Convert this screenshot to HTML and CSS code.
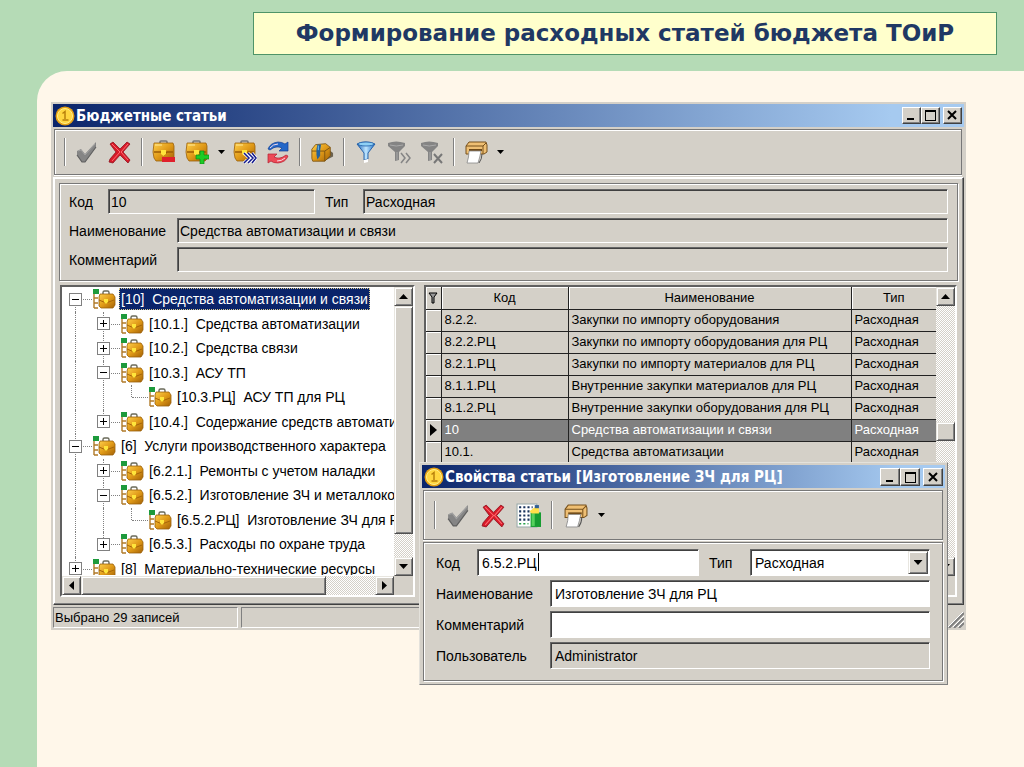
FILE: index.html
```html
<!DOCTYPE html>
<html lang="ru">
<head>
<meta charset="UTF-8">
<meta name="viewport" content="width=device-width, initial-scale=1.0">
<title>Формирование расходных статей бюджета ТОиР</title>
<link rel="stylesheet" href="styles.css">
</head>
<body>

<!-- shared icons -->
<svg class="sprite" aria-hidden="true">
    <defs>
        <linearGradient id="gold" x1="0" y1="0" x2="1" y2="1">
            <stop offset="0" stop-color="#ffcf4a"/>
            <stop offset="0.5" stop-color="#e09a18"/>
            <stop offset="1" stop-color="#a46206"/>
        </linearGradient>
        <linearGradient id="blue" x1="0" y1="0" x2="1" y2="0">
            <stop offset="0" stop-color="#1c62b8"/>
            <stop offset="0.5" stop-color="#bfe6ff"/>
            <stop offset="1" stop-color="#1b6cc6"/>
        </linearGradient>
    </defs>
    <symbol id="i-coin" viewBox="0 0 20 20">
        <circle cx="10" cy="10" r="9.5" fill="#e6a114"/>
        <circle cx="10" cy="10" r="7.5" fill="#ffd640" stroke="#fff08c" stroke-width="1"/>
        <path d="M7.5 7.5 10 5.5V13M7.5 14h6" fill="none" stroke="#b8800c" stroke-width="1.5"/>
    </symbol>
    <symbol id="i-check" viewBox="0 0 24 24">
        <path d="M2 11l4-2 4 5L21 2v5L10 22H7L2 15z" fill="#858585"/>
        <path d="M2 15l5 7h3L21 7" fill="none" stroke="#5f5f5f" stroke-width="1.2"/>
        <path d="M3 11l3-1 4 5L20 4" fill="none" stroke="#a2a2a2"/>
    </symbol>
    <symbol id="i-cross" viewBox="0 0 24 24">
        <path d="M2 4l3-2 7 7 7-7 3 2-7 8 7 8-2 3-8-8-7 8-4-1 1-3 6-7z" fill="#d71928" stroke="#8f1420" stroke-width="0.8"/>
        <path d="M4 4l8 8-8 9M20 4l-7 8 7 8" fill="none" stroke="#ff6a70" stroke-width="1"/>
    </symbol>
    <symbol id="i-case" viewBox="0 0 24 24">
        <path d="M8 4V2q0-1 1-1h5q1 0 1 1v2" fill="none" stroke="#777" stroke-width="1.6"/>
        <path d="M2 3h19l1 3v13l-2 2H4l-2-3-1-6z" fill="url(#gold)" stroke="#9a5f0a" stroke-width="0.8"/>
        <path d="M2 12h7l3 3 3-3h6" fill="none" stroke="#9c5c04" stroke-width="1.3"/>
        <path d="M9 10h5v4l-2.500 2L9 14z" fill="#ffe53b"/>
        <path d="M3 5h7" stroke="#ffe99a"/>
    </symbol>
    <symbol id="i-tree-case" viewBox="0 0 24 20">
        <path d="M2 4v15M2 9h4M2 14h4M2 19h4" fill="none" stroke="#b07a28" stroke-width="1.4"/>
        <path d="M1 0h6v5H1z" fill="#1d9a3c"/>
        <path d="M11 5V3.500Q11 2 12.500 2h3Q17 2 17 3.500V5" fill="none" stroke="#6a6a5a" stroke-width="1.4"/>
        <path d="M8 5h13l2 3v8l-2 3H9l-2-2V8z" fill="url(#gold)" stroke="#9a5f0a" stroke-width="0.8"/>
        <path d="M7 11l7 3 8-3" fill="none" stroke="#a56508"/>
        <path d="M12 10h4v3l-2 2-2-2z" fill="#ffe53b"/>
    </symbol>
    <symbol id="i-refresh" viewBox="0 0 24 24">
        <path d="M2 9q2-6 10-7 4 0 7 2l3-2v9h-9l3-3q-6-3-12 2z" fill="#2467c8" stroke="#143e94" stroke-width="0.7"/>
        <path d="M22 16q-2 6-10 7-5 0-7-2l-3 2v-9h9l-3 3q6 3 12-2z" fill="#ed4a56" stroke="#b21f32" stroke-width="0.7"/>
        <path d="M4 8q3-4 8-4M19 18q-3 3-8 3" fill="none" stroke="#f6d9e6"/>
    </symbol>
    <symbol id="i-chest" viewBox="0 0 26 24">
        <path d="M17 21l8-4v-4l-4-3z" fill="#6b6250"/>
        <path d="M2 9l4-5 11-1 5 4v9l-6 6H3l-1-3z" fill="url(#gold)" stroke="#7b5312" stroke-width="0.9"/>
        <path d="M2 11h14l6-4M16 11v11" fill="none" stroke="#7b5312"/>
        <path d="M8 4h4l-1 6v6l-3 4-1-5V9z" fill="#23629e"/>
        <path d="M9 5v5" stroke="#7cc4f2"/>
    </symbol>
    <symbol id="i-funnel" viewBox="0 0 24 24">
        <path d="M3 4q8-4 18 0l-7 9v6l-4 1v-7z" fill="url(#blue)" stroke="#1e5ba5" stroke-width="0.9"/>
        <ellipse cx="12" cy="4" rx="8" ry="2" fill="#8fd0f5" stroke="#1e5ba5" stroke-width="0.8"/>
        <path d="M10 20l4-1v3l-4 1z" fill="#fff"/>
    </symbol>
    <symbol id="i-funnel-off" viewBox="0 0 24 24">
        <path d="M1 3q8-3 17 0v3l-6 6v8l-4 1v-9L1 6z" fill="#848484"/>
        <path d="M3 5q6 2 13 0M10 12v8" fill="none" stroke="#aaa"/>
    </symbol>
    <symbol id="i-print" viewBox="0 0 24 24">
        <path d="M5 2h17l1 3v7l-3 2H2V6z" fill="#efbf73" stroke="#76501c"/>
        <path d="M2 6h17l3-3M19 6v8" fill="none" stroke="#76501c"/>
        <path d="M5 9h13v2H5z" fill="#6f4a18"/>
        <path d="M5 11h12q-1 6-3 12H3q2-6 2-12z" fill="#fff" stroke="#888" stroke-width="0.8"/>
        <path d="M18 14q0 5-3 9" fill="none" stroke="#555"/>
    </symbol>
    <symbol id="i-sheet" viewBox="0 0 24 24">
        <path d="M1 1h19v22H1z" fill="#fff" stroke="#9aa"/>
        <path d="M3 4h13M3 8h11M3 12h11M3 16h10" stroke="#18325c" stroke-width="2" stroke-dasharray="2 2"/>
        <path d="M3 20h9" stroke="#27a04a" stroke-width="1.500" stroke-dasharray="2 2"/>
        <path d="M14 9h10v14H14z" fill="#169c31"/>
        <path d="M15 10h3v12h-3z" fill="#55d15d"/>
        <path d="M13 8l5-4 4 1v5h-7z" fill="#ffe04a"/>
        <path d="M18 2h4v3h-4z" fill="#2f5f94"/>
    </symbol>
    <symbol id="i-min" viewBox="0 0 14 12"><path d="M3 9h7v2H3z"/></symbol>
    <symbol id="i-max" viewBox="0 0 14 12"><path d="M2 1h11v11H2zM3 3v8h9V3z" fill-rule="evenodd"/></symbol>
    <symbol id="i-close" viewBox="0 0 14 12"><path d="M3 2l8 8M11 2l-8 8" stroke="#000" stroke-width="2"/></symbol>
</svg>

<div class="slide">
    <h1 class="banner">Формирование расходных статей бюджета ТОиР</h1>

    <div class="sheet">
        <section class="window">
            <div class="titlebar">
                <svg class="coin"><use href="#i-coin"/></svg>
                <h2>Бюджетные статьи</h2>
                <button class="win-btn" aria-label="Свернуть"><svg><use href="#i-min"/></svg></button>
                <button class="win-btn" aria-label="Развернуть"><svg><use href="#i-max"/></svg></button>
                <button class="win-btn close" aria-label="Закрыть"><svg><use href="#i-close"/></svg></button>
            </div>

            <div class="toolbar">
                <span class="sep"></span>
                <button class="tool" aria-label="Выбрать"><svg viewBox="0 0 24 24"><use href="#i-check"/></svg></button>
                <button class="tool" aria-label="Отменить"><svg viewBox="0 0 24 24"><use href="#i-cross"/></svg></button>
                <span class="sep"></span>
                <button class="tool" aria-label="Удалить статью"><svg viewBox="0 0 24 24"><use href="#i-case"/><path d="M10 17h13v5H10z" fill="#e0202c"/></svg></button>
                <button class="tool" aria-label="Добавить статью"><svg viewBox="0 0 24 24"><use href="#i-case"/><path d="M15 11h4v4h5v4h-5v5h-4v-5h-4v-4h4z" fill="#1dcc25" stroke="#0b8a18" stroke-width="0.7"/></svg></button>
                <button class="drop" aria-label="Варианты добавления"></button>
                <button class="tool" aria-label="Переместить"><svg viewBox="0 0 24 24"><use href="#i-case"/><path d="M11 13l5 5-5 5M15 13l5 5-5 5M19 13l4 5-4 5" fill="none" stroke="#fff" stroke-width="3"/><path d="M11 13l5 5-5 5M15 13l5 5-5 5M19 13l4 5-4 5" fill="none" stroke="#141a8c" stroke-width="1.500"/></svg></button>
                <button class="tool" aria-label="Обновить"><svg viewBox="0 0 24 24"><use href="#i-refresh"/></svg></button>
                <span class="sep"></span>
                <button class="tool" aria-label="Архив"><svg viewBox="0 0 26 24"><use href="#i-chest"/></svg></button>
                <span class="sep"></span>
                <button class="tool" aria-label="Фильтр"><svg viewBox="0 0 24 24"><use href="#i-funnel"/></svg></button>
                <button class="tool" aria-label="Следующий фильтр"><svg viewBox="0 0 24 24"><use href="#i-funnel-off"/><path d="M14 13l4 5-4 5M19 13l4 5-4 5" fill="none" stroke="#858585" stroke-width="1.500"/></svg></button>
                <button class="tool" aria-label="Снять фильтр"><svg viewBox="0 0 24 24"><use href="#i-funnel-off"/><path d="M14 14l8 9M22 14l-8 9" stroke="#777" stroke-width="2"/></svg></button>
                <span class="sep"></span>
                <button class="tool" aria-label="Печать"><svg viewBox="0 0 24 24"><use href="#i-print"/></svg></button>
                <button class="drop" aria-label="Варианты печати"></button>
            </div>

            <div class="work">
                <form class="card">
                    <div class="line">
                        <label for="code" class="short">Код</label>
                        <input id="code" class="field code" value="10" readonly>
                        <label for="type">Тип</label>
                        <input id="type" class="field" value="Расходная" readonly>
                    </div>
                    <div class="line">
                        <label for="name" class="long">Наименование</label>
                        <input id="name" class="field" value="Средства автоматизации и связи" readonly>
                    </div>
                    <div class="line">
                        <label for="note" class="long">Комментарий</label>
                        <input id="note" class="field" readonly>
                    </div>
                </form>

                <div class="panes">
                    <div class="pane tree-pane">
                        <ul class="tree">
                            <li><span class="knot first"><button class="toggle minus" aria-label="Свернуть"></button></span><svg class="node"><use href="#i-tree-case"/></svg><span class="name selected">[10]&nbsp; Средства автоматизации и связи</span></li>
                            <li><span class="guide"></span><span class="knot"><button class="toggle plus" aria-label="Раскрыть"></button></span><svg class="node"><use href="#i-tree-case"/></svg><span class="name">[10.1.]&nbsp; Средства автоматизации</span></li>
                            <li><span class="guide"></span><span class="knot"><button class="toggle plus" aria-label="Раскрыть"></button></span><svg class="node"><use href="#i-tree-case"/></svg><span class="name">[10.2.]&nbsp; Средства связи</span></li>
                            <li><span class="guide"></span><span class="knot"><button class="toggle minus" aria-label="Свернуть"></button></span><svg class="node"><use href="#i-tree-case"/></svg><span class="name">[10.3.]&nbsp; АСУ ТП</span></li>
                            <li><span class="guide"></span><span class="guide"></span><span class="knot last"></span><svg class="node"><use href="#i-tree-case"/></svg><span class="name">[10.3.РЦ]&nbsp; АСУ ТП для РЦ</span></li>
                            <li><span class="guide"></span><span class="knot last"><button class="toggle plus" aria-label="Раскрыть"></button></span><svg class="node"><use href="#i-tree-case"/></svg><span class="name">[10.4.]&nbsp; Содержание средств автоматизации</span></li>
                            <li><span class="knot"><button class="toggle minus" aria-label="Свернуть"></button></span><svg class="node"><use href="#i-tree-case"/></svg><span class="name">[6]&nbsp; Услуги производственного характера</span></li>
                            <li><span class="guide"></span><span class="knot"><button class="toggle plus" aria-label="Раскрыть"></button></span><svg class="node"><use href="#i-tree-case"/></svg><span class="name">[6.2.1.]&nbsp; Ремонты с учетом наладки</span></li>
                            <li><span class="guide"></span><span class="knot"><button class="toggle minus" aria-label="Свернуть"></button></span><svg class="node"><use href="#i-tree-case"/></svg><span class="name">[6.5.2.]&nbsp; Изготовление ЗЧ и металлоконструкций</span></li>
                            <li><span class="guide"></span><span class="guide"></span><span class="knot last"></span><svg class="node"><use href="#i-tree-case"/></svg><span class="name">[6.5.2.РЦ]&nbsp; Изготовление ЗЧ для РЦ</span></li>
                            <li><span class="guide"></span><span class="knot last"><button class="toggle plus" aria-label="Раскрыть"></button></span><svg class="node"><use href="#i-tree-case"/></svg><span class="name">[6.5.3.]&nbsp; Расходы по охране труда</span></li>
                            <li><span class="knot"><button class="toggle plus" aria-label="Раскрыть"></button></span><svg class="node"><use href="#i-tree-case"/></svg><span class="name">[8]&nbsp; Материально-технические ресурсы</span></li>
                        </ul>
                        <div class="scroll vertical">
                            <button class="arrow up" aria-label="Вверх"></button>
                            <span class="thumb tree-thumb-y"></span>
                            <button class="arrow down" aria-label="Вниз"></button>
                        </div>
                        <div class="scroll horizontal">
                            <button class="arrow left" aria-label="Влево"></button>
                            <span class="thumb tree-thumb-x"></span>
                            <button class="arrow right" aria-label="Вправо"></button>
                        </div>
                        <span class="corner"></span>
                    </div>

                    <div class="pane grid-pane">
                        <table class="grid">
                            <thead>
                                <tr>
                                    <th class="mark"><svg class="mini" viewBox="0 0 10 12"><path d="M1 1h8L6 5v6H4V5z" fill="#999" stroke="#000"/></svg></th>
                                    <th class="col-code">Код</th>
                                    <th>Наименование</th>
                                    <th class="col-type">Тип</th>
                                </tr>
                            </thead>
                            <tbody>
                                <tr><td class="mark"></td><td>8.2.2.</td><td>Закупки по импорту оборудования</td><td>Расходная</td></tr>
                                <tr><td class="mark"></td><td>8.2.2.РЦ</td><td>Закупки по импорту оборудования для РЦ</td><td>Расходная</td></tr>
                                <tr><td class="mark"></td><td>8.2.1.РЦ</td><td>Закупки по импорту материалов для РЦ</td><td>Расходная</td></tr>
                                <tr><td class="mark"></td><td>8.1.1.РЦ</td><td>Внутренние закупки материалов для РЦ</td><td>Расходная</td></tr>
                                <tr><td class="mark"></td><td>8.1.2.РЦ</td><td>Внутренние закупки оборудования для РЦ</td><td>Расходная</td></tr>
                                <tr class="current"><td class="mark"><svg class="mini" viewBox="0 0 10 12"><path d="M2 0l7 6-7 6z"/></svg></td><td>10</td><td>Средства автоматизации и связи</td><td>Расходная</td></tr>
                                <tr><td class="mark"></td><td>10.1.</td><td>Средства автоматизации</td><td>Расходная</td></tr>
                            </tbody>
                        </table>
                        <div class="scroll vertical">
                            <button class="arrow up" aria-label="Вверх"></button>
                            <span class="thumb grid-thumb"></span>
                            <button class="arrow down" aria-label="Вниз"></button>
                        </div>
                    </div>
                </div>
            </div>

            <div class="status">
                <span class="cell count">Выбрано 29 записей</span>
                <span class="cell"></span>
                <svg class="grip" viewBox="0 0 16 16"><path d="M1 16L16 1M6 16L16 6M11 16l5-5" stroke="#808080" stroke-width="2"/><path d="M0 15L15 0M5 15L16 4M10 15l6-6" stroke="#fff"/></svg>
            </div>
        </section>

        <section class="window dialog">
            <div class="titlebar">
                <svg class="coin"><use href="#i-coin"/></svg>
                <h2>Свойства статьи [Изготовление ЗЧ для РЦ]</h2>
                <button class="win-btn" aria-label="Свернуть"><svg><use href="#i-min"/></svg></button>
                <button class="win-btn" aria-label="Развернуть"><svg><use href="#i-max"/></svg></button>
                <button class="win-btn close" aria-label="Закрыть"><svg><use href="#i-close"/></svg></button>
            </div>

            <div class="toolbar">
                <span class="sep"></span>
                <button class="tool" aria-label="Сохранить"><svg viewBox="0 0 24 24"><use href="#i-check"/></svg></button>
                <button class="tool" aria-label="Отменить"><svg viewBox="0 0 24 24"><use href="#i-cross"/></svg></button>
                <button class="tool" aria-label="Таблица"><svg viewBox="0 0 24 24"><use href="#i-sheet"/></svg></button>
                <span class="sep"></span>
                <button class="tool" aria-label="Печать"><svg viewBox="0 0 24 24"><use href="#i-print"/></svg></button>
                <button class="drop" aria-label="Варианты печати"></button>
            </div>

            <form class="card">
                <div class="line">
                    <label for="d-code" class="short">Код</label>
                    <span class="edit"><input id="d-code" class="field" value="6.5.2.РЦ"><i class="caret"></i></span>
                    <label for="d-type">Тип</label>
                    <span class="combo">
                        <select id="d-type" class="field">
                            <option>Расходная</option>
                        </select>
                        <span class="arrow down"></span>
                    </span>
                </div>
                <div class="line">
                    <label for="d-name" class="long">Наименование</label>
                    <input id="d-name" class="field" value="Изготовление ЗЧ для РЦ">
                </div>
                <div class="line">
                    <label for="d-note" class="long">Комментарий</label>
                    <input id="d-note" class="field">
                </div>
                <div class="line">
                    <label for="d-user" class="long">Пользователь</label>
                    <input id="d-user" class="field" value="Administrator" readonly>
                </div>
            </form>
        </section>
    </div>
</div>

</body>
</html>
```
FILE: styles.css
```css
* {
    box-sizing: border-box;
}
body {
    margin: 0;
    background: #b5dbb6;
    font-family: "Liberation Sans", Arial, sans-serif;
    font-size: 14px;
    color: #000;
}
button, input, select {
    font: inherit;
    color: inherit;
    margin: 0;
    padding: 0;
    border: 0;
    border-radius: 0;
}
.sprite {
    position: absolute;
    width: 0;
    height: 0;
}

/* slide */
.slide {
    display: flex;
    flex-direction: column;
    min-height: 100vh;
    padding-top: 12px;
}
.banner {
    margin: 0 27px 16px 253px;
    height: 43px;
    border: 1px solid #4e9468;
    background: #ffffcc;
    color: #1f3864;
    font: bold 23px/40px "DejaVu Sans", Verdana, sans-serif;
    text-align: center;
    white-space: nowrap;
}
.sheet {
    position: relative;
    flex: 1;
    margin-left: 37px;
    padding: 31px 58px 0 14px;
    border-top-left-radius: 30px;
    background: #fff7ea;
}

/* windows */
.window {
    padding: 2px;
    background: #d4d0c8;
}
.titlebar {
    display: flex;
    align-items: center;
    height: 23px;
    padding: 0 2px;
    background: linear-gradient(to right, #0a246a, #a6caf0 92%);
    color: #fff;
}
.titlebar h2 {
    flex: 1;
    margin: 0 0 0 1px;
    font: bold 15px/22px "DejaVu Sans Condensed", Tahoma, sans-serif;
    white-space: nowrap;
}
.coin {
    width: 20px;
    height: 20px;
}
.win-btn {
    display: flex;
    width: 19px;
    height: 17px;
    padding: 1px;
    background: #d4d0c8;
    border: 1px solid;
    border-color: #fff #404040 #404040 #fff;
    box-shadow: inset -1px -1px #808080;
}
.win-btn.close {
    margin-left: 3px;
}
.win-btn svg {
    width: 14px;
    height: 12px;
}

.toolbar {
    display: flex;
    align-items: center;
    gap: 9px;
    height: 46px;
    margin: 2px 2px 0 1px;
    padding-left: 9px;
    border: 1px solid #777;
    box-shadow: inset 1px 1px #fff, 0 1px #fff;
}
.tool {
    width: 24px;
    height: 24px;
    background: none;
}
.tool svg {
    display: block;
    width: 100%;
    height: 100%;
}
.sep {
    width: 2px;
    height: 28px;
    border-left: 1px solid #808080;
    border-right: 1px solid #fff;
}
.drop {
    display: grid;
    place-items: center;
    width: 6px;
    height: 24px;
    background: none;
}
.drop::before {
    content: "";
    width: 7px;
    height: 4px;
    background: #000;
    clip-path: polygon(0 0, 100% 0, 50% 100%);
}

/* form */
.card {
    display: flex;
    flex-direction: column;
    gap: 4px;
    padding: 5px 9px 8px;
    border: 1px solid #777;
    box-shadow: inset 1px 1px #fff, 1px 1px #fff;
}
.line {
    display: flex;
    align-items: center;
}
.line label {
    width: 38px;
}
.line .short {
    width: 39px;
}
.line .long {
    width: 108px;
}
.field {
    flex: 1;
    min-width: 0;
    height: 25px;
    padding: 0 2px;
    background: #fff;
    border: 1px solid;
    border-color: #666 #fff #fff #666;
    box-shadow: inset 1px 1px #404040;
    outline: none;
}
.field:read-only:not(select) {
    background: #d4d0c8;
}
.field.code {
    flex: none;
    width: 207px;
    margin-right: 10px;
}

/* work area */
.work {
    margin: 2px 0 0;
    padding: 5px 5px 7px;
    border: 1px solid;
    border-color: #fff #404040 #404040 #fff;
    box-shadow: inset -1px -1px #808080, inset 1px 1px #fff;
}
.panes {
    display: grid;
    grid-template-columns: 356px 1fr;
    gap: 9px;
    height: 312px;
    margin-top: 4px;
}
.pane {
    display: grid;
    grid-template-columns: 1fr 19px;
    grid-template-rows: 1fr 19px;
    min-height: 0;
    border: 2px solid;
    border-color: #606060 #fff #fff #606060;
    overflow: hidden;
}
.tree-pane {
    margin-left: 1px;
    background: #fff;
}
.grid-pane {
    margin-right: 1px;
}
.corner {
    background: #d4d0c8;
}

/* tree */
.tree {
    display: grid;
    grid-auto-rows: 1fr;
    height: 294px;
    margin: 0 0 -6px;
    padding: 0 0 0 7px;
    list-style: none;
    overflow: hidden;
    clip-path: inset(0 0 6px 0);
}
.tree li {
    display: flex;
    align-items: center;
    white-space: nowrap;
}
.guide, .knot {
    position: relative;
    flex: none;
    align-self: stretch;
    width: 28px;
}
.knot {
    display: flex;
    align-items: center;
    width: 23px;
}
.guide::before, .knot::before {
    content: "";
    position: absolute;
    top: 0;
    bottom: 0;
    left: 6px;
    border-left: 1px dotted #808080;
}
.knot::after {
    content: "";
    position: absolute;
    top: 50%;
    left: 7px;
    right: 0;
    border-top: 1px dotted #808080;
}
.knot.first::before {
    top: 50%;
}
.knot.last::before {
    bottom: 50%;
}
.toggle {
    position: relative;
    z-index: 1;
    width: 13px;
    height: 13px;
    border: 1px solid #808080;
    background: linear-gradient(#000, #000) center / 7px 1px no-repeat #fff;
}
.toggle.plus {
    background: linear-gradient(#000, #000) center / 7px 1px no-repeat, linear-gradient(#000, #000) center / 1px 7px no-repeat, #fff;
}
.node {
    flex: none;
    width: 24px;
    height: 20px;
}
.name {
    margin-left: 3px;
    padding: 0 2px;
    line-height: 22px;
}
.name.selected {
    background: #0a246a;
    color: #fff;
    outline: 1px dotted #d8c98c;
    outline-offset: -1px;
}

/* scrollbars */
.scroll {
    display: flex;
    background: repeating-conic-gradient(#fff 0 25%, #d4d0c8 0 50%) 0 0 / 2px 2px;
}
.scroll.vertical {
    flex-direction: column;
}
.scroll .down, .scroll .right {
    margin-top: auto;
    margin-left: auto;
}
.arrow, .thumb {
    flex: none;
    width: 19px;
    height: 19px;
    background: #d4d0c8;
    border: 1px solid;
    border-color: #e8e6e0 #505050 #505050 #e8e6e0;
    box-shadow: inset 1px 1px #fff, inset -1px -1px #808080;
}
.arrow {
    display: grid;
    place-items: center;
}
.arrow::before {
    content: "";
    width: 9px;
    height: 5px;
    background: #000;
    clip-path: polygon(0 100%, 50% 0, 100% 100%);
}
.arrow.down::before {
    clip-path: polygon(0 0, 100% 0, 50% 100%);
}
.arrow.left::before, .arrow.right::before {
    width: 5px;
    height: 9px;
    clip-path: polygon(0 50%, 100% 0, 100% 100%);
}
.arrow.right::before {
    clip-path: polygon(0 0, 100% 50%, 0 100%);
}
.tree-thumb-y {
    height: 228px;
}
.tree-thumb-x {
    width: 245px;
}
.grid-thumb {
    margin-top: 116px;
}

/* table */
.grid {
    align-self: start;
    width: 100%;
    border-collapse: collapse;
    table-layout: fixed;
    font-size: 13px;
}
.grid th, .grid td {
    height: 22px;
    padding: 0 3px;
    border-right: 1px solid #222;
    border-bottom: 1px solid #222;
    font-weight: normal;
    line-height: 20px;
    text-align: left;
    white-space: nowrap;
    overflow: hidden;
}
.grid th {
    text-align: center;
    box-shadow: inset 1px 1px #fff;
}
.grid th:last-child, .grid td:last-child {
    border-right: 0;
}
.grid .mark {
    width: 15px;
    padding: 0;
    text-align: center;
    box-shadow: inset 1px 1px #fff;
}
.col-code {
    width: 127px;
}
.col-type {
    width: 85px;
}
.mini {
    display: block;
    width: 10px;
    height: 12px;
    margin: 0 auto;
}
.current td:not(.mark) {
    background: #808080;
    color: #fff;
}

/* status bar */
.status {
    display: flex;
    gap: 3px;
    height: 23px;
    padding-top: 2px;
}
.cell {
    flex: 1;
    padding-left: 1px;
    border: 1px solid;
    border-color: #808080 #fff #fff #808080;
    font-size: 13px;
    line-height: 19px;
}
.count {
    flex: none;
    width: 185px;
}
.grip {
    align-self: end;
    width: 16px;
    height: 16px;
}

/* properties dialog */
.dialog {
    position: absolute;
    top: 391px;
    left: 382px;
    right: 76px;
    border: 1px solid;
    border-color: #e4e2dc #808080 #808080 #e4e2dc;
}
.dialog .win-btn {
    width: 20px;
    height: 18px;
    padding: 2px;
}
.dialog .toolbar {
    gap: 10px;
    height: 50px;
    padding-left: 10px;
}
.dialog .tool {
    width: 25px;
    height: 25px;
}
.dialog .card {
    margin: 2px 2px 1px 1px;
    padding: 6px 12px 11px;
}
.dialog .field {
    height: 27px;
    padding: 0 4px;
}
.dialog .short {
    width: 41px;
}
.dialog .long {
    width: 114px;
}
.edit {
    position: relative;
    display: flex;
    width: 222px;
    margin-right: 10px;
}
.caret {
    position: absolute;
    top: 4px;
    left: 61px;
    width: 1px;
    height: 18px;
    background: #000;
}
.dialog .line label[for="d-type"] {
    width: 41px;
}
.combo {
    position: relative;
    display: flex;
    flex: 1;
}
.combo select {
    appearance: none;
}
.combo .arrow {
    position: absolute;
    top: 2px;
    right: 2px;
    width: 20px;
    height: 23px;
    pointer-events: none;
}
```
